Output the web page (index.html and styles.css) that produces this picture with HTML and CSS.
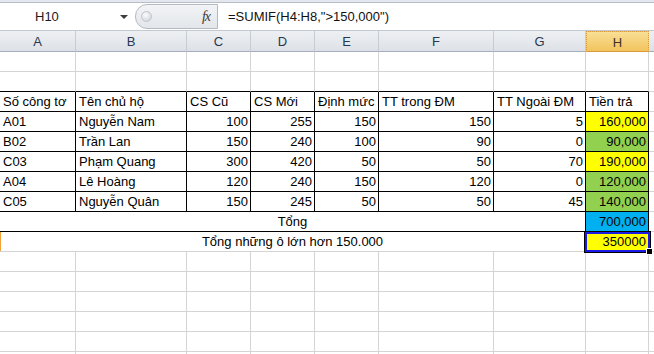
FILE: index.html
```html
<!DOCTYPE html>
<html lang="vi">
<head>
    <meta charset="UTF-8">
    <title>Tiền điện</title>
    <link rel="stylesheet" href="styles.css">
</head>
<body>

<div class="ribbon-edge"></div>

<div class="formula-bar">
    <div class="name-box">
        <span class="cell-ref">H10</span>
        <span class="caret"></span>
    </div>
    <div class="fx-zone">
        <span class="grip"></span>
        <span class="fx">fx</span>
    </div>
    <div class="formula">=SUMIF(H4:H8,"&gt;150,000")</div>
</div>

<div class="sheet">
    <!-- column headers -->
    <div class="col">A</div><div class="col">B</div><div class="col">C</div><div class="col">D</div>
    <div class="col">E</div><div class="col">F</div><div class="col">G</div><div class="col active">H</div>
    <div class="col last"></div>

    <!-- row 1 -->
    <div class="c"></div><div class="c"></div><div class="c"></div><div class="c"></div>
    <div class="c"></div><div class="c"></div><div class="c"></div><div class="c"></div><div class="c last"></div>
    <!-- row 2 -->
    <div class="c tb"></div><div class="c tb"></div><div class="c tb"></div><div class="c tb"></div>
    <div class="c tb"></div><div class="c tb"></div><div class="c tb"></div><div class="c tb"></div><div class="c last"></div>

    <!-- row 3 -->
    <div class="c t">Số công tơ</div>
    <div class="c t">Tên chủ hộ</div>
    <div class="c t">CS Cũ</div>
    <div class="c t">CS Mới</div>
    <div class="c t">Định mức</div>
    <div class="c t">TT trong ĐM</div>
    <div class="c t">TT Ngoài ĐM</div>
    <div class="c t">Tiền trả</div>
    <div class="c last"></div>

    <!-- row 4 -->
    <div class="c t">A01</div>
    <div class="c t">Nguyễn Nam</div>
    <div class="c t num">100</div>
    <div class="c t num">255</div>
    <div class="c t num">150</div>
    <div class="c t num">150</div>
    <div class="c t num">5</div>
    <div class="c t num yellow">160,000</div>
    <div class="c last"></div>

    <!-- row 5 -->
    <div class="c t">B02</div>
    <div class="c t">Trần Lan</div>
    <div class="c t num">150</div>
    <div class="c t num">240</div>
    <div class="c t num">100</div>
    <div class="c t num">90</div>
    <div class="c t num">0</div>
    <div class="c t num green">90,000</div>
    <div class="c last"></div>

    <!-- row 6 -->
    <div class="c t">C03</div>
    <div class="c t">Phạm Quang</div>
    <div class="c t num">300</div>
    <div class="c t num">420</div>
    <div class="c t num">50</div>
    <div class="c t num">50</div>
    <div class="c t num">70</div>
    <div class="c t num yellow">190,000</div>
    <div class="c last"></div>

    <!-- row 7 -->
    <div class="c t">A04</div>
    <div class="c t">Lê Hoàng</div>
    <div class="c t num">120</div>
    <div class="c t num">240</div>
    <div class="c t num">150</div>
    <div class="c t num">120</div>
    <div class="c t num">0</div>
    <div class="c t num green">120,000</div>
    <div class="c last"></div>

    <!-- row 8 -->
    <div class="c t">C05</div>
    <div class="c t">Nguyễn Quân</div>
    <div class="c t num">150</div>
    <div class="c t num">245</div>
    <div class="c t num">50</div>
    <div class="c t num">50</div>
    <div class="c t num">45</div>
    <div class="c t num green">140,000</div>
    <div class="c last"></div>

    <!-- row 9 -->
    <div class="c t merged">Tổng</div>
    <div class="c t num blue">700,000</div>
    <div class="c last"></div>

    <!-- row 10 -->
    <div class="c merged row-mark">Tổng những ô lớn hơn 150.000</div>
    <div class="c num yellow selected">350000<span class="handle"></span></div>
    <div class="c last"></div>

    <!-- rows 11-16 -->
    <div class="c"></div><div class="c"></div><div class="c"></div><div class="c"></div>
    <div class="c"></div><div class="c"></div><div class="c"></div><div class="c"></div><div class="c last"></div>
    <div class="c"></div><div class="c"></div><div class="c"></div><div class="c"></div>
    <div class="c"></div><div class="c"></div><div class="c"></div><div class="c"></div><div class="c last"></div>
    <div class="c"></div><div class="c"></div><div class="c"></div><div class="c"></div>
    <div class="c"></div><div class="c"></div><div class="c"></div><div class="c"></div><div class="c last"></div>
    <div class="c"></div><div class="c"></div><div class="c"></div><div class="c"></div>
    <div class="c"></div><div class="c"></div><div class="c"></div><div class="c"></div><div class="c last"></div>
    <div class="c"></div><div class="c"></div><div class="c"></div><div class="c"></div>
    <div class="c"></div><div class="c"></div><div class="c"></div><div class="c"></div><div class="c last"></div>
    <div class="c"></div><div class="c"></div><div class="c"></div><div class="c"></div>
    <div class="c"></div><div class="c"></div><div class="c"></div><div class="c"></div><div class="c last"></div>
</div>

</body>
</html>
```

FILE: styles.css
```css
body {
    margin: 0;
    width: 654px;
    height: 354px;
    overflow: hidden;
    background: #fff;
    color: #000;
    font-family: "Liberation Sans", Arial, sans-serif;
    font-size: 13px;
}

/* bottom edge of the ribbon */
.ribbon-edge {
    height: 2px;
    background: #e4e8ee;
    border-bottom: 1px solid #b8bec7;
}

/* name box + formula line */
.formula-bar {
    display: flex;
    height: 27px;
    border-bottom: 1px solid #c3c9d1;
    background: #fff;
}

.name-box {
    width: 135px;
    display: flex;
    align-items: center;
    box-sizing: border-box;
    padding-left: 35px;
}

.cell-ref {
    flex: 1;
    color: #1b1b1b;
}

.caret {
    width: 0;
    height: 0;
    margin-right: 7px;
    border-left: 4px solid transparent;
    border-right: 4px solid transparent;
    border-top: 4px solid #3c3c3c;
}

.fx-zone {
    width: 83px;
    margin: 1px 0;
    display: flex;
    align-items: center;
    justify-content: space-between;
    box-sizing: border-box;
    padding: 0 5px 0 5px;
    background: linear-gradient(#f2f4f6, #e3e6ea);
    border: 1px solid #b4bac3;
    border-radius: 12px 0 0 12px;
}

.grip {
    width: 9px;
    height: 9px;
    border-radius: 50%;
    background: radial-gradient(circle at 40% 35%, #fdfdfd, #c9cdd3);
    border: 1px solid #c0c5cc;
}

.fx {
    font-family: "Liberation Serif", "Times New Roman", serif;
    font-style: italic;
    font-size: 14px;
    letter-spacing: -1px;
    color: #3b3b3b;
    padding-right: 2px;
}

.formula {
    flex: 1;
    display: flex;
    align-items: center;
    padding-left: 10px;
    color: #111;
}

/* the grid */
.sheet {
    display: grid;
    grid-template-columns: 76px 111px 64px 64px 64px 115px 92px 63px 1fr;
    grid-template-rows: 21px;
    grid-auto-rows: 20px;
    height: 323px;
    overflow: hidden;
}

.col {
    box-sizing: border-box;
    text-align: center;
    line-height: 21px;
    color: #28384f;
    background: linear-gradient(#eef0f3, #dde1e7);
    border-right: 1px solid #c6ccd4;
    border-bottom: 1px solid #a4adb9;
}

.col.active {
    color: #3f3222;
    background: linear-gradient(#f9df95, #f2c45e);
    border: 1px dotted #d99a3c;
    border-bottom-style: solid;
}

.c {
    box-sizing: border-box;
    padding: 0 3px;
    line-height: 20px;
    white-space: nowrap;
    overflow: hidden;
    border-right: 1px solid #d4d4d4;
    border-bottom: 1px solid #d4d4d4;
}

.last {
    border-right: none;
}

.tb {
    border-bottom-color: #000;
}

.t {
    border-right-color: #000;
    border-bottom-color: #000;
}

.num {
    text-align: right;
    padding-right: 2px;
}

.merged {
    grid-column: span 7;
    text-align: center;
    overflow: visible;
}

.row-mark {
    box-shadow: inset 1px 0 0 #f0a238;
}

.yellow {
    background: #ffff00;
}

.green {
    background: #92d050;
}

.blue {
    background: #00b0f0;
}

/* active cell H10 */
.selected {
    position: relative;
    overflow: visible;
}

.selected::before {
    content: "";
    position: absolute;
    left: -1px;
    top: 0;
    right: -2px;
    bottom: -1px;
    border: 2px solid #1a1ae6;
    box-shadow: 0 0 0 1px #000;
    pointer-events: none;
}

.handle {
    position: absolute;
    right: -5px;
    bottom: -4px;
    width: 5px;
    height: 5px;
    background: #000;
    border: 1px solid #fff;
}
```
